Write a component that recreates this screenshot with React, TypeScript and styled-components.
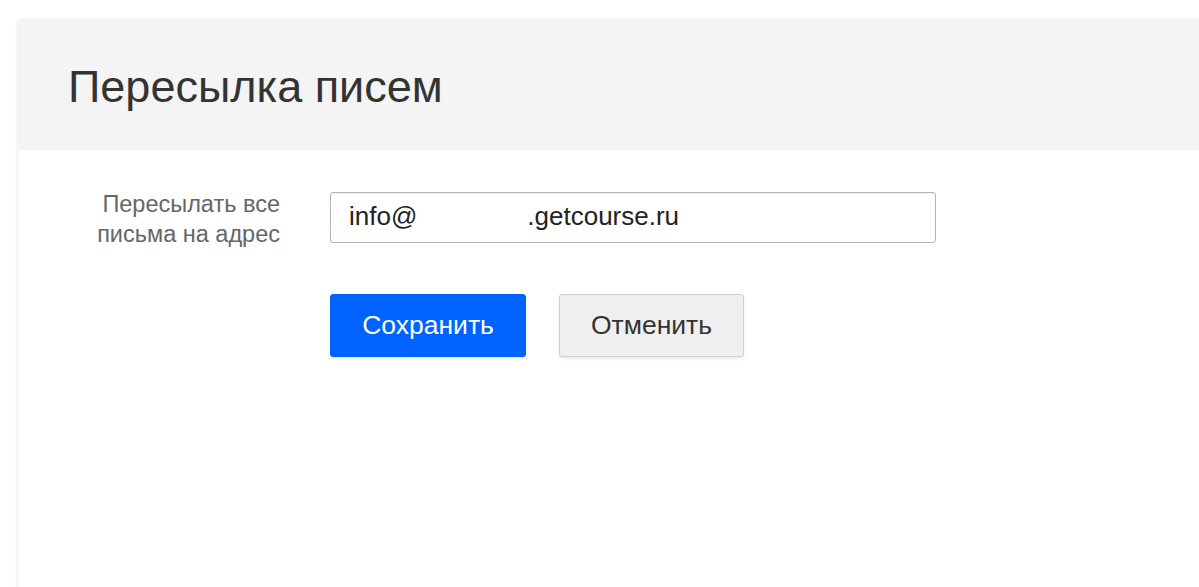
import styled, { createGlobalStyle } from 'styled-components';

const GlobalStyle = createGlobalStyle`
  html, body {
    margin: 0;
    padding: 0;
    background: #ffffff;
    font-family: "Liberation Sans", Arial, sans-serif;
    overflow: hidden;
  }
`;

const Page = styled.div`
  width: 1199px;
  height: 587px;
  padding: 20px 0 0 18px;
  box-sizing: border-box;
  overflow: hidden;
`;

const Panel = styled.div`
  width: 1220px;
  height: 620px;
  background: #fff;
  border-radius: 4px;
  box-shadow: 0 0 4px rgba(0, 0, 0, 0.12);
  overflow: hidden;
`;

const Header = styled.div`
  height: 130px;
  background: #f4f4f4;
  display: flex;
  align-items: center;
  padding-left: 50px;
  box-sizing: border-box;
`;

const Title = styled.h1`
  margin: 4px 0 0;
  font-size: 45px;
  font-weight: 400;
  color: #333;
`;

const Form = styled.div`
  display: grid;
  grid-template-columns: 212px 606px;
  column-gap: 50px;
  row-gap: 45px;
  padding: 42px 0 0 50px;
`;

const Label = styled.div`
  text-align: right;
  font-size: 23.5px;
  line-height: 30px;
  color: #666;
  margin-top: -3px;
  white-space: nowrap;
`;

const Field = styled.div`
  height: 51px;
  box-sizing: border-box;
  border: 1px solid #b4b4b4;
  border-radius: 3px;
  display: flex;
  align-items: center;
  padding: 0 0 2px 18px;
  font-size: 26px;
  color: #222;
  box-shadow: inset 0 1px 1px rgba(0, 0, 0, 0.06);
`;

const Hidden = styled.span`
  display: inline-block;
  width: 110px;
`;

const Actions = styled.div`
  grid-column: 2;
  display: flex;
  gap: 33px;
`;

const Button = styled.button<{ $primary?: boolean }>`
  width: ${(p) => (p.$primary ? '196px' : '185px')};
  height: 63px;
  padding: 0;
  border-radius: 3px;
  font-family: "Liberation Sans", Arial, sans-serif;
  font-size: 26.5px;
  cursor: pointer;
  border: 1px solid ${(p) => (p.$primary ? '#0062ff' : '#cfcfcf')};
  background: ${(p) => (p.$primary ? '#0063ff' : '#efefef')};
  color: ${(p) => (p.$primary ? '#fff' : '#333')};
  box-shadow: 0 2px 3px rgba(0, 0, 0, 0.08);
`;

function App() {
  return (
    <Page>
      <GlobalStyle />
      <Panel>
        <Header>
          <Title>Пересылка писем</Title>
        </Header>
        <Form>
          <Label>
            Пересылать все
            <br />
            письма на адрес
          </Label>
          <Field>
            info@<Hidden />.getcourse.ru
          </Field>
          <Actions>
            <Button $primary>Сохранить</Button>
            <Button>Отменить</Button>
          </Actions>
        </Form>
      </Panel>
    </Page>
  );
}

export default App;
